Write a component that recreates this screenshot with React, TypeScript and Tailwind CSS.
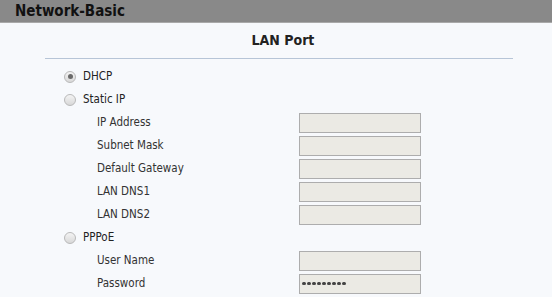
import React from "react";

const font = { fontFamily: '"DejaVu Sans Condensed", "DejaVu Sans", sans-serif' };

function Radio({ checked }: { checked?: boolean }) {
  return (
    <span className="flex h-[12px] w-[12px] items-center justify-center rounded-full border border-[#b9b9b9] bg-gradient-to-b from-[#f4f4f4] to-[#d8d8d8]">
      {checked && <span className="h-[5px] w-[5px] rounded-full bg-[#6a6a6a]" />}
    </span>
  );
}

function Field({ label, dots }: { label: string; dots?: number }) {
  return (
    <div className="flex h-[23px] items-center">
      <div className="w-[254px] pl-[52px] text-[11.5px] text-[#333]">{label}</div>
      <div className="flex h-[20px] w-[122px] items-center gap-[1.5px] border border-[#adadad] bg-[#ebeae4] px-[2px]">
        {Array.from({ length: dots ?? 0 }).map((_, i) => (
          <span key={i} className="h-[3.5px] w-[3.5px] rounded-full bg-[#444]" />
        ))}
      </div>
    </div>
  );
}

function Option({ label, checked }: { label: string; checked?: boolean }) {
  return (
    <div className="flex h-[23px] items-center gap-[7px] pl-[19px] text-[11.5px] text-[#222]">
      <Radio checked={checked} />
      <span>{label}</span>
    </div>
  );
}

export default function App() {
  return (
    <div className="h-[297px] w-[552px] overflow-hidden bg-[#f7f9fc]" style={font}>
      <div className="flex h-[23px] items-center border-b border-[#a9a9a9] bg-[#898989] pl-[15px] text-[15px] font-bold text-[#111]">
        Network-Basic
      </div>
      <div className="ml-[45px] w-[468px]">
        <div className="flex h-[36px] items-center justify-center border-b border-[#b7c5d7] pl-[8px] text-[14px] font-bold text-[#222]">
          LAN Port
        </div>
        <div className="pt-[6px]">
          <Option label="DHCP" checked />
          <Option label="Static IP" />
          <Field label="IP Address" />
          <Field label="Subnet Mask" />
          <Field label="Default Gateway" />
          <Field label="LAN DNS1" />
          <Field label="LAN DNS2" />
          <Option label="PPPoE" />
          <Field label="User Name" />
          <Field label="Password" dots={9} />
        </div>
      </div>
    </div>
  );
}
